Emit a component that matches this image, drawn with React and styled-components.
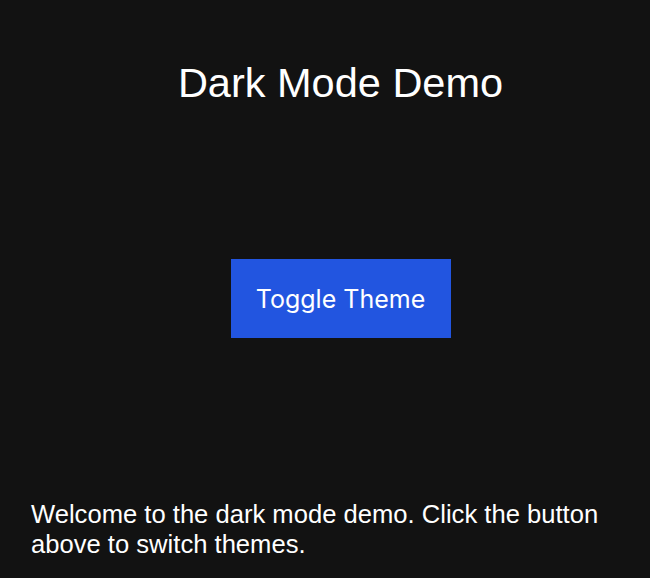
import styled, { createGlobalStyle } from 'styled-components';

const GlobalStyle = createGlobalStyle`
  html, body {
    margin: 0;
    padding: 0;
    background: #121212;
  }
`;

export default function App() {
  return (
    <Page>
      <GlobalStyle />
      <Title>Dark Mode Demo</Title>
      <ToggleButton type="button">Toggle Theme</ToggleButton>
      <Intro>
        Welcome to the dark mode demo. Click the button above to switch themes.
      </Intro>
    </Page>
  );
}

const Page = styled.div`
  min-height: 100vh;
  box-sizing: border-box;
  display: flex;
  flex-direction: column;
  align-items: center;
  padding: 60px 0 19px 31px;
  background: #121212;
  color: #ffffff;
  font-family: 'Liberation Sans', Arial, sans-serif;
`;

const Title = styled.h1`
  margin: 0;
  font-size: 41.5px;
  font-weight: 400;
  line-height: 46px;
`;

const ToggleButton = styled.button`
  margin-top: 153px;
  width: 220px;
  height: 79px;
  border: none;
  border-radius: 0;
  background: #2255e0;
  color: #ffffff;
  font-family: Inter, 'Noto Sans', sans-serif;
  font-size: 25px;
  cursor: pointer;
`;

const Intro = styled.p`
  align-self: stretch;
  margin: auto 0 0;
  font-size: 25.6px;
  line-height: 30px;
`;
